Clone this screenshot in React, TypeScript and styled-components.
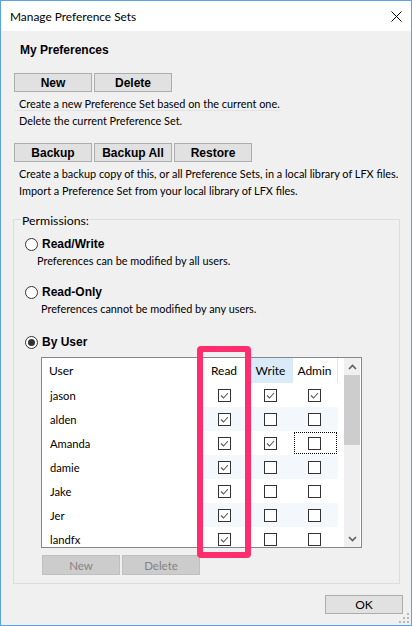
import styled, { createGlobalStyle } from 'styled-components';

const GlobalStyle = createGlobalStyle`
  html, body {
    margin: 0;
    padding: 0;
    background: #ffffff;
  }
`;

const UI_FONT = `Lato, 'Noto Sans', sans-serif`;
const MS_FONT = `'Liberation Sans', Arial, sans-serif`;

const Window = styled.div`
  position: relative;
  width: 412px;
  height: 626px;
  box-sizing: border-box;
  border: 1px solid #5aa3e8;
  display: flex;
  flex-direction: column;
  font-family: ${UI_FONT};
  color: #000;
`;

const TitleBar = styled.div`
  height: 30px;
  flex-shrink: 0;
  background: #fff;
  display: flex;
  align-items: center;
  justify-content: space-between;
  padding: 0 9px 0 9px;
  font-size: 11.9px;
`;

const Body = styled.div`
  flex: 1;
  background: #f0f0f0;
  display: flex;
  flex-direction: column;
  padding: 12px 8px 0 12px;
  overflow: hidden;
`;

const SectionTitle = styled.div`
  margin-left: 7px;
  height: 14px;
  line-height: 14px;
  font: bold 12px ${MS_FONT};
`;

const ButtonRow = styled.div<{ $top: number; $left?: number }>`
  display: flex;
  gap: 2px;
  margin-top: ${(p) => p.$top}px;
  margin-left: ${(p) => p.$left ?? 1}px;
`;

const Button = styled.div<{ $disabled?: boolean; $plain?: boolean }>`
  width: 78px;
  height: ${(p) => (p.$disabled ? 20 : 19)}px;
  box-sizing: border-box;
  border: 1px solid ${(p) => (p.$disabled ? '#bfbfbf' : '#adadad')};
  background: ${(p) => (p.$disabled ? '#cccccc' : '#e1e1e1')};
  color: ${(p) => (p.$disabled ? '#838383' : '#000')};
  display: flex;
  align-items: center;
  justify-content: center;
  font: ${(p) =>
    p.$disabled ? `11.5px ${UI_FONT}` : p.$plain ? `12px ${UI_FONT}` : `bold 12px ${MS_FONT}`};
`;

const HelpBlock = styled.div`
  margin-top: 2px;
  margin-left: 1px;
  width: 267px;
`;

const HelpLine = styled.div<{ $rule?: boolean }>`
  height: 17px;
  box-sizing: border-box;
  padding: 2px 0 0 5px;
  line-height: 15px;
  font-size: 10.9px;
  white-space: nowrap;
  border-bottom: 1px solid ${(p) => (p.$rule ? '#e2e2e2' : 'transparent')};
`;

const Group = styled.section`
  margin-top: 21px;
  width: 387px;
  box-sizing: border-box;
  padding-bottom: 8px;
  border: 1px solid #dcdcdc;
  display: flex;
  flex-direction: column;
  align-items: flex-start;
`;

const GroupLabel = styled.div`
  margin: -7px 0 0 7px;
  padding: 0 1px;
  background: #f0f0f0;
  font-size: 12.3px;
  line-height: 16px;
`;

const RadioRow = styled.div<{ $top: number }>`
  margin-top: ${(p) => p.$top}px;
  margin-left: 11px;
  height: 16px;
  display: flex;
  align-items: center;
  gap: 4px;
  font: bold 12px ${MS_FONT};
`;

const RadioCircle = styled.span<{ $checked?: boolean }>`
  width: 13px;
  height: 13px;
  box-sizing: border-box;
  border: 1px solid #333;
  border-radius: 50%;
  background: #fff;
  display: flex;
  align-items: center;
  justify-content: center;
  &::after {
    content: '';
    width: 7px;
    height: 7px;
    border-radius: 50%;
    background: ${(p) => (p.$checked ? '#333' : 'transparent')};
  }
`;

const RadioHint = styled.div<{ $indent: number }>`
  margin-top: 1px;
  margin-left: ${(p) => p.$indent}px;
  height: 16px;
  line-height: 16px;
  font-size: 10.9px;
`;

const Table = styled.div`
  margin-top: 7px;
  margin-left: 27px;
  width: 321px;
  height: 191px;
  box-sizing: border-box;
  border: 1px solid #828790;
  background: #fff;
  display: flex;
  overflow: hidden;
`;

const TableContent = styled.div`
  flex: 1;
  display: flex;
  flex-direction: column;
`;

const COLS = '158px 50px 43px 45px';

const HeaderRow = styled.div`
  display: grid;
  grid-template-columns: ${COLS};
  height: 25px;
  flex-shrink: 0;
`;

const HeaderCell = styled.div<{ $hover?: boolean; $sep?: boolean; $left?: boolean }>`
  display: flex;
  align-items: center;
  justify-content: ${(p) => (p.$left ? 'flex-start' : 'center')};
  padding: ${(p) => (p.$left ? '0 0 0 7px' : '0 2px 0 0')};
  font-size: 12px;
  background: ${(p) => (p.$hover ? '#d9ebf9' : 'transparent')};
  box-shadow: ${(p) => (p.$sep ? 'inset -1px 0 0 #e5e5e5' : 'none')};
`;

const DataRow = styled.div`
  display: grid;
  grid-template-columns: ${COLS};
  height: 24px;
  flex-shrink: 0;
`;

const NameCell = styled.div`
  display: flex;
  align-items: center;
  padding-left: 8px;
  font-size: 11.2px;
`;

const CheckCell = styled.div<{ $alt?: boolean; $focus?: boolean }>`
  position: relative;
  display: flex;
  align-items: center;
  justify-content: center;
  padding-right: 2px;
  background: ${(p) => (p.$alt ? '#f4f7fc' : 'transparent')};
  &::after {
    content: '';
    display: ${(p) => (p.$focus ? 'block' : 'none')};
    position: absolute;
    inset: 1px 1px 1px 1px;
    border: 1px dotted #000;
  }
`;

const Box = styled.span`
  width: 13px;
  height: 13px;
  box-sizing: border-box;
  border: 1px solid #333;
  background: #fff;
  display: flex;
`;

const ScrollBar = styled.div`
  width: 16px;
  margin-left: auto;
  margin-right: 1px;
  background: #f0f0f0;
  display: flex;
  flex-direction: column;
`;

const ScrollArrow = styled.div`
  height: 17px;
  display: flex;
  align-items: center;
  justify-content: center;
`;

const ScrollThumb = styled.div`
  height: 70px;
  background: #cdcdcd;
`;

const ScrollGap = styled.div`
  flex: 1;
`;

const Footer = styled.div`
  display: flex;
  justify-content: flex-end;
  margin-top: 11px;
`;

const Highlight = styled.div`
  position: absolute;
  left: 196px;
  top: 345px;
  width: 54px;
  height: 212px;
  box-sizing: border-box;
  border: 6px solid #fe2d6e;
  border-radius: 4px;
  pointer-events: none;
`;

const Grip = styled.svg`
  position: absolute;
  right: 1px;
  bottom: 1px;
`;

const Check = () => (
  <svg width="11" height="11" viewBox="0 0 11 11">
    <polyline points="2,5.5 4.5,8 9,3" fill="none" stroke="#555" strokeWidth="1.1" />
  </svg>
);

const CheckBox = ({ on }: { on: boolean }) => <Box>{on ? <Check /> : null}</Box>;

const Chevron = ({ up }: { up: boolean }) => (
  <svg width="9" height="6" viewBox="0 0 9 6">
    <polyline
      points={up ? '1,5 4.5,1.5 8,5' : '1,1 4.5,4.5 8,1'}
      fill="none"
      stroke="#606060"
      strokeWidth="1.6"
    />
  </svg>
);

const users = [
  { name: 'jason', read: true, write: true, admin: true },
  { name: 'alden', read: true, write: false, admin: false },
  { name: 'Amanda', read: true, write: true, admin: false, focus: true },
  { name: 'damie', read: true, write: false, admin: false },
  { name: 'Jake', read: true, write: false, admin: false },
  { name: 'Jer', read: true, write: false, admin: false },
  { name: 'landfx', read: true, write: false, admin: false },
];

export default function App() {
  return (
    <>
      <GlobalStyle />
      <Window>
        <TitleBar>
          <span>Manage Preference Sets</span>
          <svg width="11" height="11" viewBox="0 0 11 11">
            <path d="M0.5 0.5 L10.5 10.5 M10.5 0.5 L0.5 10.5" stroke="#000" strokeWidth="1" />
          </svg>
        </TitleBar>
        <Body>
          <SectionTitle>My Preferences</SectionTitle>
          <ButtonRow $top={16}>
            <Button>New</Button>
            <Button>Delete</Button>
          </ButtonRow>
          <HelpBlock>
            <HelpLine $rule>Create a new Preference Set based on the current one.</HelpLine>
            <HelpLine>Delete the current Preference Set.</HelpLine>
          </HelpBlock>
          <ButtonRow $top={15}>
            <Button>Backup</Button>
            <Button>Backup All</Button>
            <Button>Restore</Button>
          </ButtonRow>
          <HelpBlock>
            <HelpLine>
              Create a backup copy of this, or all Preference Sets, in a local library of LFX files.
            </HelpLine>
            <HelpLine>Import a Preference Set from your local library of LFX files.</HelpLine>
          </HelpBlock>

          <Group>
            <GroupLabel>Permissions:</GroupLabel>
            <RadioRow $top={7}>
              <RadioCircle />
              Read/Write
            </RadioRow>
            <RadioHint $indent={23}>Preferences can be modified by all users.</RadioHint>
            <RadioRow $top={15}>
              <RadioCircle />
              Read-Only
            </RadioRow>
            <RadioHint $indent={27}>Preferences cannot be modified by any users.</RadioHint>
            <RadioRow $top={17}>
              <RadioCircle $checked />
              By User
            </RadioRow>

            <Table>
              <TableContent>
                <HeaderRow>
                  <HeaderCell $left>User</HeaderCell>
                  <HeaderCell>Read</HeaderCell>
                  <HeaderCell $hover>Write</HeaderCell>
                  <HeaderCell $sep>Admin</HeaderCell>
                </HeaderRow>
                {users.map((u, i) => (
                  <DataRow key={u.name}>
                    <NameCell>{u.name}</NameCell>
                    <CheckCell $alt={i % 2 === 1}>
                      <CheckBox on={u.read} />
                    </CheckCell>
                    <CheckCell $alt={i % 2 === 1}>
                      <CheckBox on={u.write} />
                    </CheckCell>
                    <CheckCell $alt={i % 2 === 1} $focus={u.focus}>
                      <CheckBox on={u.admin} />
                    </CheckCell>
                  </DataRow>
                ))}
              </TableContent>
              <ScrollBar>
                <ScrollArrow>
                  <Chevron up />
                </ScrollArrow>
                <ScrollThumb />
                <ScrollGap />
                <ScrollArrow>
                  <Chevron up={false} />
                </ScrollArrow>
              </ScrollBar>
            </Table>

            <ButtonRow $top={7} $left={28}>
              <Button $disabled>New</Button>
              <Button $disabled>Delete</Button>
            </ButtonRow>
          </Group>

          <Footer>
            <Button $plain>OK</Button>
          </Footer>
        </Body>
        <Highlight />
        <Grip width="12" height="12" viewBox="0 0 12 12">
          {[
            [9, 1],
            [5, 5],
            [9, 5],
            [1, 9],
            [5, 9],
            [9, 9],
          ].map(([x, y]) => (
            <rect key={`${x}-${y}`} x={x} y={y} width="2" height="2" fill="#b8b8b8" />
          ))}
        </Grip>
      </Window>
    </>
  );
}
